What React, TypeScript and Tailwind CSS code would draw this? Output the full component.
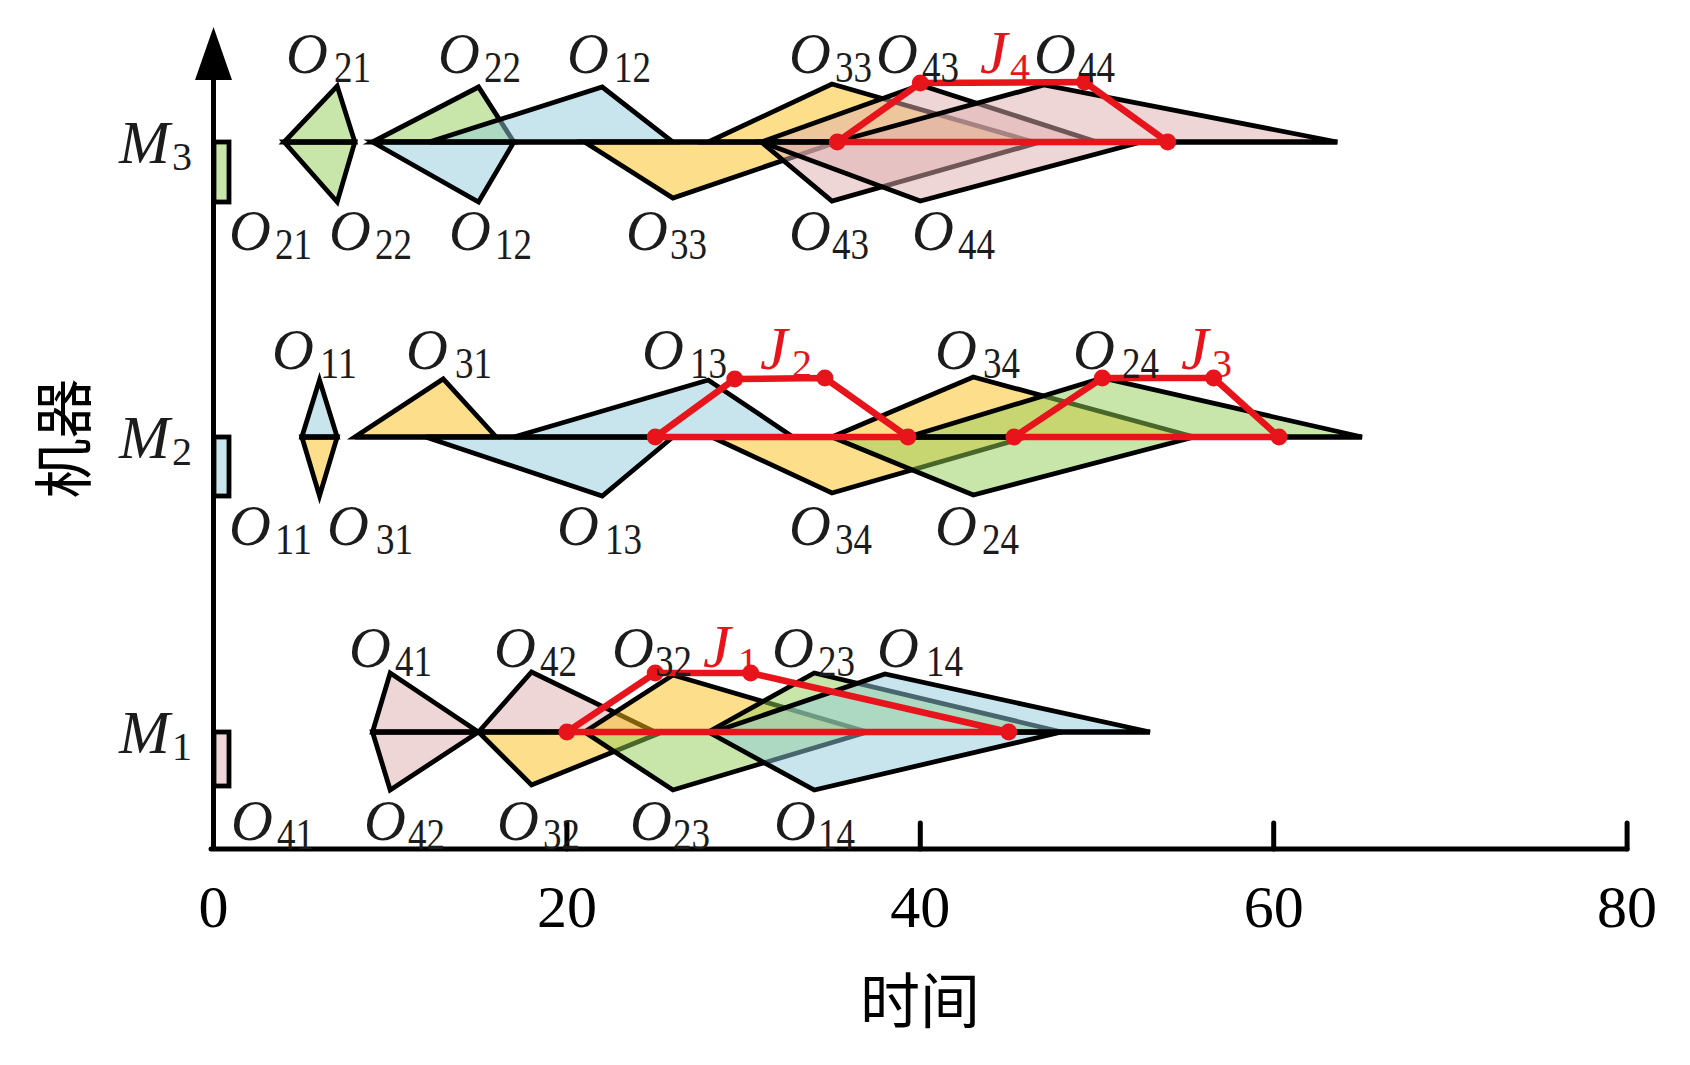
// Fuzzy Gantt chart: three machines, triangular fuzzy start (below) / finish (above) times.
const X = (t: number) => 213.5 + 17.67 * t;

const INK = "#1c1c1c";
const RED = "#e8141b";
const SERIF = "'Liberation Serif', 'Times New Roman', serif";
const CJK = "'Noto Sans CJK SC', 'Noto Sans', sans-serif";

// base colours are drawn at 50% opacity so overlaps darken like the original
const FILL: Record<string, string> = {
  blue: "#91c9d9",
  green: "#91cd55",
  yellow: "#fbbd15",
  pink: "#ddadad",
};

type Tri = { c: string; t: [number, number, number]; peak: number };

interface Row {
  base: number;
  rect: { c: string; bottom: number };
  tris: Tri[];
  spans: [number, number][];
}

const rows: Row[] = [
  {
    base: 142,
    rect: { c: "green", bottom: 202 },
    tris: [
      { c: "green", t: [4, 7, 8], peak: 202 },
      { c: "green", t: [4, 7, 8], peak: 86 },
      { c: "green", t: [9, 15, 17], peak: 87 },
      { c: "blue", t: [9, 15, 17], peak: 202 },
      { c: "blue", t: [12.2, 22, 26], peak: 87 },
      { c: "yellow", t: [21, 26, 35.3], peak: 198 },
      { c: "yellow", t: [28, 35, 46.4], peak: 84 },
      { c: "pink", t: [31, 35, 46.8], peak: 201 },
      { c: "pink", t: [31, 40, 50], peak: 85 },
      { c: "pink", t: [31, 40, 52.5], peak: 201 },
      { c: "pink", t: [35.2, 47, 63.6], peak: 85 },
    ],
    spans: [
      [4, 8],
      [9, 63.6],
    ],
  },
  {
    base: 437,
    rect: { c: "blue", bottom: 496 },
    tris: [
      { c: "yellow", t: [5, 6, 7], peak: 496 },
      { c: "blue", t: [5, 6, 7], peak: 380 },
      { c: "yellow", t: [8, 13, 16], peak: 379 },
      { c: "blue", t: [12, 22, 26], peak: 496 },
      { c: "blue", t: [17, 28, 32.8], peak: 380 },
      { c: "yellow", t: [28.2, 35, 46], peak: 493 },
      { c: "yellow", t: [35, 43, 55.5], peak: 377 },
      { c: "green", t: [35, 43, 55.5], peak: 495 },
      { c: "green", t: [39.3, 50.3, 65], peak: 378 },
    ],
    spans: [
      [5, 7],
      [8, 65],
    ],
  },
  {
    base: 732,
    rect: { c: "pink", bottom: 786 },
    tris: [
      { c: "pink", t: [9, 10, 15], peak: 790 },
      { c: "pink", t: [9, 10, 15], peak: 673 },
      { c: "pink", t: [15, 18, 25], peak: 672 },
      { c: "yellow", t: [15, 18, 25.4], peak: 785 },
      { c: "yellow", t: [21, 26, 37], peak: 675 },
      { c: "green", t: [21, 26, 37], peak: 790 },
      { c: "green", t: [28, 34, 48], peak: 673 },
      { c: "blue", t: [28, 34, 48], peak: 790 },
      { c: "blue", t: [28.3, 38, 53], peak: 674 },
    ],
    spans: [[9, 53]],
  },
];

// red job paths (time, y)
const jobs: [number, number][][] = [
  [
    [35.3, 142],
    [40, 83],
    [49.3, 82],
    [54, 142],
  ],
  [
    [25, 437],
    [29.5, 379],
    [34.6, 378],
    [39.3, 437],
  ],
  [
    [45.3, 437],
    [50.3, 378],
    [56.6, 378],
    [60.3, 437],
  ],
  [
    [20, 732],
    [25, 673],
    [30.4, 673],
    [45, 732],
  ],
];

// [letter, O left x, subscript left x, baseline, sub]
type Lab = [string, number, number, number, string];

const labels: Lab[] = [
  // M3 top
  ["O", 289, 334, 73, "21"],
  ["O", 441, 484, 73, "22"],
  ["O", 570, 614, 73, "12"],
  ["O", 792, 835, 73, "33"],
  ["O", 879, 922, 73, "43"],
  ["J", 982, 1010, 73, "4"],
  ["O", 1037, 1078, 73, "44"],
  // M3 bottom
  ["O", 232, 275, 250, "21"],
  ["O", 332, 375, 250, "22"],
  ["O", 452, 495, 250, "12"],
  ["O", 629, 670, 250, "33"],
  ["O", 792, 832, 250, "43"],
  ["O", 915, 958, 250, "44"],
  // M2 top
  ["O", 275, 320, 369, "11"],
  ["O", 409, 455, 369, "31"],
  ["O", 645, 690, 369, "13"],
  ["J", 762, 792, 369, "2"],
  ["O", 938, 983, 369, "34"],
  ["O", 1076, 1122, 369, "24"],
  ["J", 1183, 1212, 369, "3"],
  // M2 bottom
  ["O", 232, 275, 545, "11"],
  ["O", 330, 376, 545, "31"],
  ["O", 560, 605, 545, "13"],
  ["O", 792, 835, 545, "34"],
  ["O", 938, 982, 545, "24"],
  // M1 top
  ["O", 352, 395, 667, "41"],
  ["O", 497, 540, 667, "42"],
  ["O", 615, 655, 667, "32"],
  ["J", 705, 738, 667, "1"],
  ["O", 775, 818, 667, "23"],
  ["O", 880, 926, 667, "14"],
  // M1 bottom
  ["O", 234, 277, 840, "41"],
  ["O", 367, 408, 840, "42"],
  ["O", 500, 543, 840, "32"],
  ["O", 633, 673, 840, "23"],
  ["O", 777, 818, 840, "14"],
];

function Label({ l }: { l: Lab }) {
  const [ch, ox, sx, y, sub] = l;
  if (ch === "J") {
    return (
      <g fill={RED} fontFamily={SERIF}>
        <text x={ox - 2} y={y} fontSize={62} fontStyle="italic">
          J
        </text>
        <text x={sx} y={y + 8} fontSize={40}>
          {sub}
        </text>
      </g>
    );
  }
  return (
    <g fill={INK} fontFamily={SERIF}>
      <text x={ox - 3} y={y} fontSize={58} fontStyle="italic">
        O
      </text>
      <text x={sx} y={y + 9} fontSize={45} textLength={37} lengthAdjust="spacingAndGlyphs">
        {sub}
      </text>
    </g>
  );
}

function JobPath({ pts }: { pts: [number, number][] }) {
  const p = pts.map(([t, y]) => `${X(t)},${y}`).join(" ");
  return (
    <g>
      <polygon points={p} fill="none" stroke={RED} strokeWidth={6.5} strokeLinejoin="round" />
      {pts.map(([t, y], i) => (
        <circle key={i} cx={X(t)} cy={y} r={8.5} fill={RED} />
      ))}
    </g>
  );
}

function Chart() {
  return (
    <svg width={1690} height={1065} viewBox="0 0 1690 1065" className="block">
      {/* machine rows */}
      {rows.map((r, ri) => (
        <g key={ri}>
          <rect
            x={214}
            y={r.base}
            width={15}
            height={r.rect.bottom - r.base}
            fill={FILL[r.rect.c]}
            fillOpacity={0.5}
            stroke="#000"
            strokeWidth={4.8}
          />
          {r.tris.map((tr, i) => (
            <polygon
              key={i}
              points={`${X(tr.t[0])},${r.base} ${X(tr.t[1])},${tr.peak} ${X(tr.t[2])},${r.base}`}
              fill={FILL[tr.c]}
              fillOpacity={0.5}
              stroke="#000"
              strokeWidth={4.8}
              strokeLinejoin="miter"
              strokeMiterlimit={5}
            />
          ))}
          {r.spans.map(([a, b], i) => (
            <line key={i} x1={X(a)} y1={r.base} x2={X(b)} y2={r.base} stroke="#000" strokeWidth={4.8} />
          ))}
        </g>
      ))}

      {/* job paths */}
      {jobs.map((pts, i) => (
        <JobPath key={i} pts={pts} />
      ))}

      {/* axes */}
      <line x1={213.5} y1={78} x2={213.5} y2={851} stroke="#000" strokeWidth={5} />
      <polygon points="213.5,27 195,80 232,80" fill="#000" />
      <line x1={211} y1={849} x2={1627} y2={849} stroke="#000" strokeWidth={5} strokeLinecap="round" />
      {[20, 40, 60, 80].map((t) => (
        <line key={t} x1={X(t)} y1={823} x2={X(t)} y2={849} stroke="#000" strokeWidth={5} strokeLinecap="round" />
      ))}
      {[0, 20, 40, 60, 80].map((t) => (
        <text key={t} x={X(t)} y={927} fontSize={60} textAnchor="middle" fontFamily={SERIF} fill="#000">
          {t}
        </text>
      ))}

      {/* machine labels */}
      {[
        ["3", 142],
        ["2", 437],
        ["1", 732],
      ].map(([n, b]) => (
        <g key={n as string} fontFamily={SERIF} fill={INK}>
          <text x={119} y={(b as number) + 21} fontSize={61} fontStyle="italic">
            M
          </text>
          <text x={172} y={(b as number) + 28} fontSize={40}>
            {n}
          </text>
        </g>
      ))}

      {/* operation labels */}
      {labels.map((l, i) => (
        <Label key={i} l={l} />
      ))}

      {/* axis titles */}
      <text x={920} y={1023} fontSize={60} textAnchor="middle" fontFamily={CJK} fill="#000">
        时间
      </text>
      <text
        x={59.5}
        y={438.5}
        fontSize={60}
        textAnchor="middle"
        dominantBaseline="central"
        fontFamily={CJK}
        fill="#000"
        transform="rotate(-90 59.5 438.5)"
      >
        机器
      </text>
    </svg>
  );
}

export default function App() {
  return (
    <div className="w-[1690px] h-[1065px] bg-white overflow-hidden">
      <Chart />
    </div>
  );
}
